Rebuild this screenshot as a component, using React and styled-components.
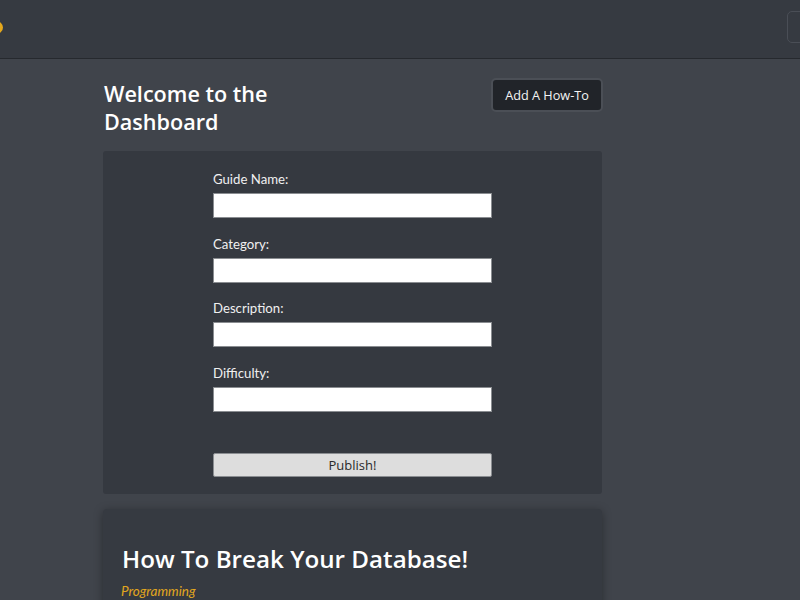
import React from "react";
import styled, { createGlobalStyle } from "styled-components";

const Global = createGlobalStyle`
  html, body { margin: 0; padding: 0; }
  body {
    background: #40444b;
    font-family: "Open Sans", "Noto Sans", sans-serif;
    color: #f2f2f2;
    overflow-x: hidden;
  }
  * { box-sizing: border-box; }
`;

const NavBar = styled.header`
  height: 59px;
  background: #363a41;
  border-bottom: 1px solid #26292e;
  display: flex;
  align-items: center;
  justify-content: space-between;
  overflow: hidden;
`;

const Brand = styled.div`
  width: 14px;
  height: 13px;
  margin-left: -11px;
  margin-top: -4px;
  border-radius: 50%;
  background: #e5a81c;
`;

const Toggler = styled.button`
  width: 44px;
  height: 32px;
  margin-right: -31px;
  margin-top: -5px;
  background: transparent;
  border: 1px solid #4a4e56;
  border-radius: 5px;
  display: flex;
  flex-direction: column;
  justify-content: center;
  gap: 5px;
  padding: 0 0 0 12px;
`;

const Bar = styled.span`
  display: block;
  width: 20px;
  height: 2px;
  background: #22252a;
`;

const Main = styled.main`
  width: 499px;
  margin-left: 103px;
  padding-top: 19px;
`;

const TopRow = styled.div`
  display: flex;
  justify-content: space-between;
  align-items: flex-start;
`;

const Title = styled.h1`
  margin: 2px 0 0 1px;
  max-width: 230px;
  font-size: 21.6px;
  line-height: 28px;
  font-weight: 600;
  color: #ffffff;
`;

const AddButton = styled.button`
  width: 112px;
  height: 34px;
  padding: 0;
  background: #212429;
  color: #f4f4f4;
  border: 2px solid #4b4f56;
  border-radius: 5px;
  font-family: "Open Sans", "Noto Sans", sans-serif;
  font-size: 12.7px;
  margin-right: -1px;
`;

const FormCard = styled.section`
  margin-top: 15px;
  background: #353940;
  border-radius: 3px;
  padding: 20px 0 17px 110px;
`;

const Form = styled.form`
  width: 279px;
  display: flex;
  flex-direction: column;
`;

const Field = styled.div`
  display: flex;
  flex-direction: column;
  margin-bottom: ${(p) => (p.last ? "41px" : "17.6px")};
`;

const Label = styled.label`
  font-family: "Lato", "Open Sans", sans-serif;
  font-size: 13.2px;
  line-height: 17px;
  color: #f0f0f0;
  margin-bottom: 5px;
`;

const Input = styled.input`
  height: 25px;
  background: #ffffff;
  border: 1px solid #8a8d91;
  border-radius: 0;
  padding: 0 4px;
`;

const Publish = styled.button`
  height: 24px;
  background: #dddddd;
  border: 1px solid #8a8d91;
  border-radius: 2px;
  color: #2a2a2a;
  font-family: "Open Sans", "Noto Sans", sans-serif;
  font-size: 13px;
  padding: 0;
`;

const GuideCard = styled.article`
  margin-top: 15px;
  background: #363a41;
  border-radius: 4px;
  box-shadow: 0 2px 10px rgba(0, 0, 0, 0.35);
  padding: 34px 19px 20px;
`;

const GuideTitle = styled.h2`
  margin: 0;
  font-size: 24.2px;
  line-height: 32px;
  font-weight: 600;
  color: #ffffff;
`;

const Category = styled.p`
  margin: 8px 0 0 -1px;
  font-family: "Lato", "Open Sans", sans-serif;
  font-style: italic;
  font-size: 13.5px;
  color: #e2a71e;
`;

const fields = ["Guide Name:", "Category:", "Description:", "Difficulty:"];

export default function App() {
  return (
    <>
      <Global />
      <NavBar>
        <Brand />
        <Toggler aria-label="menu">
          <Bar />
          <Bar />
          <Bar />
        </Toggler>
      </NavBar>
      <Main>
        <TopRow>
          <Title>Welcome to the Dashboard</Title>
          <AddButton>Add A How-To</AddButton>
        </TopRow>
        <FormCard>
          <Form onSubmit={(e) => e.preventDefault()}>
            {fields.map((f, i) => (
              <Field key={f} last={i === fields.length - 1}>
                <Label>{f}</Label>
                <Input type="text" />
              </Field>
            ))}
            <Publish type="submit">Publish!</Publish>
          </Form>
        </FormCard>
        <GuideCard>
          <GuideTitle>How To Break Your Database!</GuideTitle>
          <Category>Programming</Category>
        </GuideCard>
      </Main>
    </>
  );
}
